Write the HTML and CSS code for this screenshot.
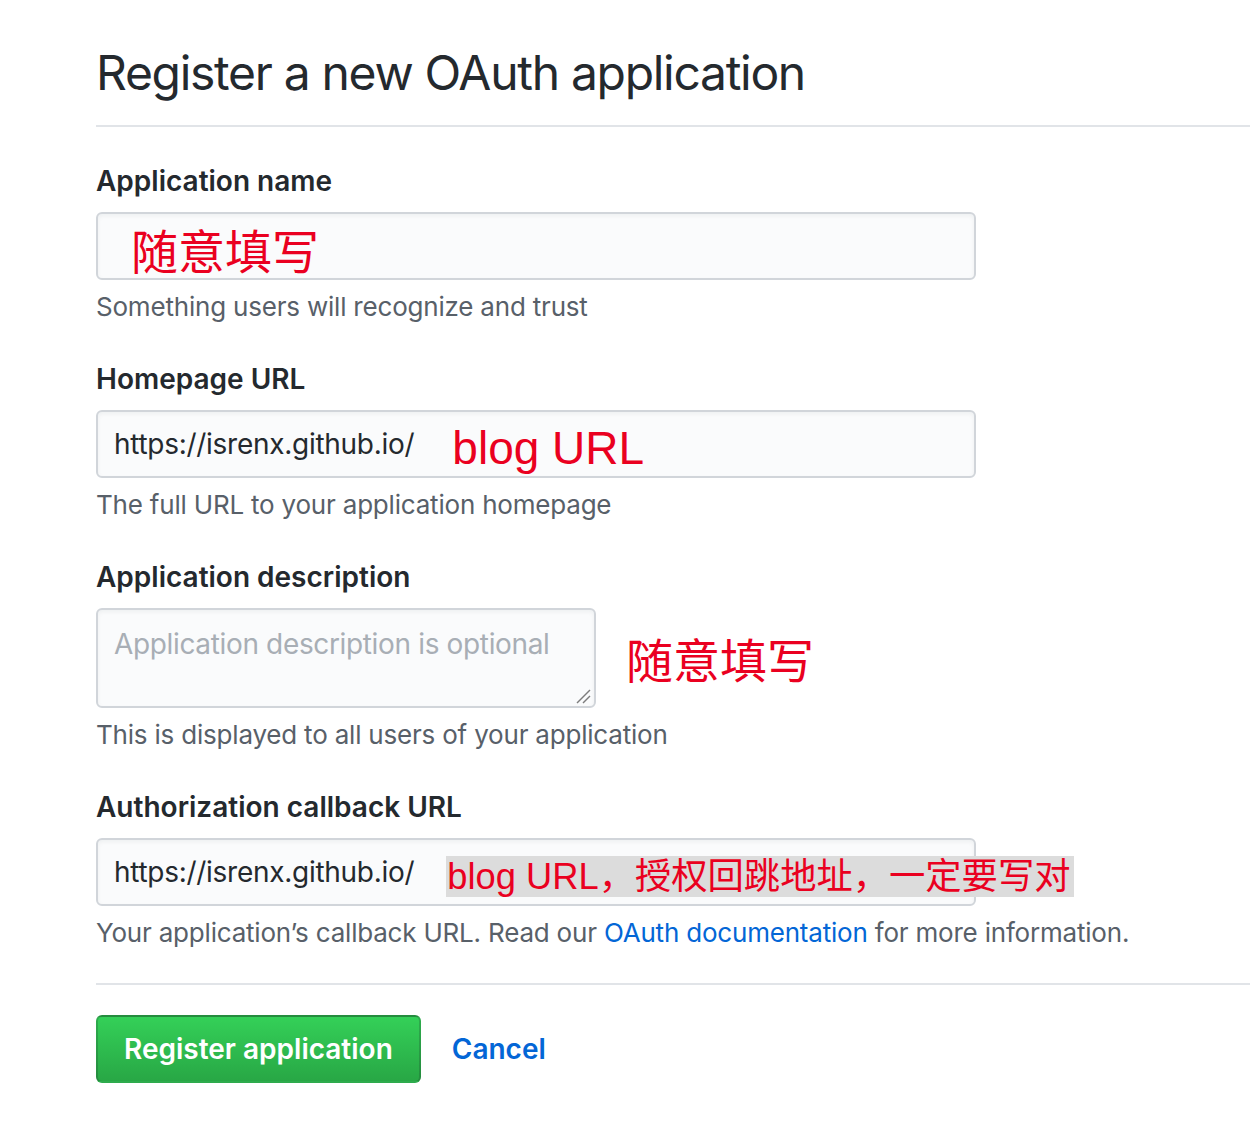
FILE: index.html
```html
<!DOCTYPE html>
<html lang="en">
<head>
<meta charset="utf-8">
<title>Register a new OAuth application</title>
<link rel="stylesheet" href="styles.css">
</head>
<body>
<div class="page">
  <h2 class="subhead">Register a new OAuth application</h2>
  <form class="form">
    <div class="group">
      <label class="label">Application name</label>
      <div class="field">
        <span class="anno anno-first">随意填写</span>
      </div>
      <p class="note">Something users will recognize and trust</p>
    </div>
    <div class="group">
      <label class="label">Homepage URL</label>
      <div class="field">
        <span class="value">https://isrenx.github.io/</span>
        <span class="anno anno-url">blog URL</span>
      </div>
      <p class="note">The full URL to your application homepage</p>
    </div>
    <div class="group">
      <label class="label">Application description</label>
      <div class="area-row">
        <div class="area-wrap">
          <textarea class="area" placeholder="Application description is optional"></textarea>
          <svg class="grip" width="18" height="18" viewBox="0 0 18 18" aria-hidden="true">
            <line x1="2" y1="16" x2="15" y2="3" stroke="#7d7d7d" stroke-width="1.4"/>
            <line x1="8" y1="16" x2="15" y2="9" stroke="#7d7d7d" stroke-width="1.4"/>
          </svg>
        </div>
        <span class="anno anno-desc">随意填写</span>
      </div>
      <p class="note">This is displayed to all users of your application</p>
    </div>
    <div class="group">
      <label class="label">Authorization callback URL</label>
      <div class="field">
        <span class="value">https://isrenx.github.io/</span>
        <span class="anno anno-cb">blog URL，授权回跳地址，一定要写对</span>
      </div>
      <p class="note">Your application’s callback URL. Read our <a class="link" href="#">OAuth documentation</a> for more information.</p>
    </div>
    <div class="actions">
      <button type="button" class="btn">Register application</button>
      <a class="cancel" href="#">Cancel</a>
    </div>
  </form>
</div>
</body>
</html>
```

FILE: styles.css
```css
html, body {
  margin: 0;
  padding: 0;
  background: #ffffff;
}
body {
  font-family: Inter, "Liberation Sans", "Noto Sans CJK SC", sans-serif;
  color: #24292e;
}
.page {
  padding: 43px 0 0 96px;
}
.subhead {
  margin: 0;
  font-size: 48px;
  line-height: 60px;
  font-weight: 400;
  letter-spacing: -1.3px;
  color: #24292e;
  padding-bottom: 22px;
  border-bottom: 2px solid #e1e4e8;
}
.form {
  padding-top: 34px;
}
.group {
  margin-bottom: 32px;
}
.label {
  display: block;
  font-size: 28px;
  line-height: 40px;
  font-weight: 600;
  margin-bottom: 11px;
}
.field {
  box-sizing: border-box;
  width: 880px;
  height: 68px;
  border: 2px solid #d1d5da;
  border-radius: 6px;
  background: #fafbfc;
  display: flex;
  align-items: center;
  padding-left: 16px;
  box-shadow: inset 0 2px 4px rgba(27,31,35,0.05);
}
.value {
  font-size: 28px;
  letter-spacing: -0.28px;
  color: #24292e;
  white-space: nowrap;
}
.anno {
  font-family: "Liberation Sans", "Noto Sans CJK SC", sans-serif;
  color: #ea0020;
  white-space: nowrap;
  flex-shrink: 0;
}
.anno-first {
  font-family: "Noto Sans CJK SC", sans-serif;
  font-size: 47px;
  margin-left: 17px;
  margin-top: 4px;
}
.anno-url {
  font-size: 46px;
  margin-left: 38px;
  margin-top: 8px;
}
.anno-desc {
  font-family: "Noto Sans CJK SC", sans-serif;
  font-size: 47px;
  margin-left: 30px;
  margin-top: -2px;
}
.anno-cb {
  font-size: 36.3px;
  line-height: 41px;
  margin-left: 32px;
  margin-top: 9px;
  background: #dcdcdc;
  padding: 0 3px 0 1px;
}
.area-row {
  display: flex;
  align-items: center;
}
.area-wrap {
  position: relative;
  width: 500px;
  height: 100px;
}
.area {
  box-sizing: border-box;
  width: 500px;
  height: 100px;
  border: 2px solid #d1d5da;
  border-radius: 6px;
  background: #fafbfc;
  padding: 14px 16px;
  font-family: Inter, "Liberation Sans", sans-serif;
  font-size: 28px;
  line-height: 40px;
  letter-spacing: -0.35px;
  color: #24292e;
  box-shadow: inset 0 2px 4px rgba(27,31,35,0.05);
  margin: 0;
  display: block;
  resize: none;
}
.area::placeholder {
  color: #a8aeb5;
}
.grip {
  position: absolute;
  right: 3px;
  bottom: 3px;
  pointer-events: none;
}
.note {
  margin: 7px 0 0 0;
  font-size: 26px;
  line-height: 40px;
  letter-spacing: -0.2px;
  color: #586069;
}
.link {
  color: #0366d6;
  text-decoration: none;
}
.actions {
  border-top: 2px solid #e1e4e8;
  margin-top: -2px;
  padding-top: 30px;
  display: flex;
  align-items: center;
  gap: 31px;
}
.btn {
  box-sizing: border-box;
  height: 68px;
  padding: 0 26px;
  border: 2px solid rgba(27,31,35,0.2);
  border-radius: 6px;
  background: linear-gradient(180deg, #34d058 0%, #28a745 100%);
  color: #ffffff;
  font-family: Inter, "Liberation Sans", sans-serif;
  font-size: 28px;
  font-weight: 600;
}
.cancel {
  color: #0366d6;
  text-decoration: none;
  font-size: 28px;
  font-weight: 600;
}
```
